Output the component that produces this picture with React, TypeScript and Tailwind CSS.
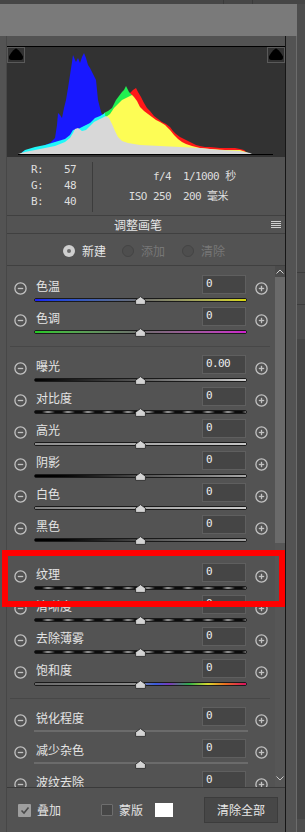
import React from 'react'

type Track = 'temp' | 'tint' | 'exposure' | 'pattern' | 'light' | 'shadow' | 'white' | 'black' | 'sat' | 'plain'

type Row = { label: string; value: string; track: Track }

// full class strings per track type (tailwind needs them written out)
const trackClass: Record<Track, string> = {
  temp: 'bg-linear-to-r from-[#1c1cf4] via-[#6c6c6c] to-[#d8d800]',
  tint: 'bg-linear-to-r from-[#20c820] via-[#6c6c6c] to-[#cc1ecc]',
  exposure: 'bg-linear-to-r from-[#030303] via-[#5a5a5a] to-[#cfcfcf]',
  pattern:
    'bg-[repeating-linear-gradient(90deg,#0b0b0b_0px,#0b0b0b_7px,#8a8a8a_12px,#8a8a8a_14px,#0b0b0b_20px)]',
  light: 'bg-linear-to-r from-[#8e8e8e] to-[#c4c4c4]',
  shadow: 'bg-linear-to-r from-[#000000] via-[#505050] to-[#a8a8a8]',
  white: 'bg-linear-to-r from-[#808080] to-[#cacaca]',
  black: 'bg-linear-to-r from-[#000000] via-[#4c4c4c] to-[#a0a0a0]',
  sat: 'bg-[linear-gradient(90deg,#6a6a6a,#8c8c8c_48%,#3a5cdc_57%,#7a3ab8_64%,#2fae4a_73%,#d8d830_82%,#e87020_90%,#d81060_100%)]',
  plain: 'bg-[#6b6b6b]',
}

const sections: Row[][] = [
  [
    { label: '色温', value: '0', track: 'temp' },
    { label: '色调', value: '0', track: 'tint' },
  ],
  [
    { label: '曝光', value: '0.00', track: 'exposure' },
    { label: '对比度', value: '0', track: 'pattern' },
    { label: '高光', value: '0', track: 'light' },
    { label: '阴影', value: '0', track: 'shadow' },
    { label: '白色', value: '0', track: 'white' },
    { label: '黑色', value: '0', track: 'black' },
  ],
  [
    { label: '纹理', value: '0', track: 'pattern' },
    { label: '清晰度', value: '0', track: 'pattern' },
    { label: '去除薄雾', value: '0', track: 'pattern' },
    { label: '饱和度', value: '0', track: 'sat' },
  ],
  [
    { label: '锐化程度', value: '0', track: 'plain' },
    { label: '减少杂色', value: '0', track: 'plain' },
    { label: '波纹去除', value: '0', track: 'plain' },
  ],
]

function RoundIcon({ plus }: { plus?: boolean }) {
  return (
    <svg width="13" height="13" viewBox="0 0 13 13" className="mt-[7px] shrink-0">
      <circle cx="6.5" cy="6.5" r="5.6" fill="none" stroke="#c2c2c2" strokeWidth="1.3" />
      <line x1="3.8" y1="6.5" x2="9.2" y2="6.5" stroke="#c2c2c2" strokeWidth="1.3" />
      {plus && <line x1="6.5" y1="3.8" x2="6.5" y2="9.2" stroke="#c2c2c2" strokeWidth="1.3" />}
    </svg>
  )
}

function Thumb() {
  return (
    <svg width="11" height="9" viewBox="0 0 11 9" className="absolute left-[101px] top-[-2px]">
      <path d="M5.5 0.6 L10.4 4.2 L10.4 8.4 L0.6 8.4 L0.6 4.2 Z" fill="#d4d4d4" stroke="#2a2a2a" strokeWidth="0.9" />
    </svg>
  )
}

function SliderRow({ row }: { row: Row }) {
  return (
    <div className="flex h-[32px] items-start px-[7px]">
      <RoundIcon />
      <div className="ml-[7px] mr-[8px] w-[213px]">
        <div className="flex h-[19px] items-center">
          <span className="flex-1 pl-[2px] pt-[3px] text-[12px] leading-none text-[#e4e4e4]">{row.label}</span>
          <div className="mr-[1px] flex h-[19px] w-[44px] items-center border border-[#5f5f5f] bg-[#454545] pl-[3px] font-['DejaVu_Sans_Mono',monospace] text-[11px] tracking-[-0.6px] text-[#ececec]">
            {row.value}
          </div>
        </div>
        <div className="relative mt-[4px] h-[4px]">
          {row.track === 'plain' ? (
            <div className="mt-[1px] h-[2px] w-[214px] bg-[#6b6b6b]" />
          ) : (
            <div className="h-[4px] rounded-[2px] border border-[#1a1a1a] p-0">
              <div className={'h-full w-full ' + trackClass[row.track]} />
            </div>
          )}
          <Thumb />
        </div>
      </div>
      <RoundIcon plus />
    </div>
  )
}

function Histogram() {
  return (
    <svg width="278" height="110" viewBox="0 0 278 110">
      <g transform="translate(-7,-47)">
        <polygon
          fill="#1818ff"
          points="22,154 22,152 30,149 40,147 50,143 55,138 57,125 58,113 60,115 62,118 64,108 66,100 68,88 70,75 72,62 73,55 75,60 76,62 78,58 80,63 82,57 84,53 86,58 88,65 90,68 92,72 94,76 96,80 97,90 98,100 100,108 101,112 104,118 104,154"
        />
        <polygon
          fill="#ff1818"
          points="130,154 130,93 133,90 136,88 138,92 141,97 144,103 147,108 150,111 154,116 158,119 162,122 166,124 170,127 173,131 176,134 180,137 184,139 188,141 192,143 196,145 200,146 205,147 210,147 220,148 235,148 240,149 244,150 246,152 246,154"
        />
        <polygon
          fill="#20f050"
          points="104,154 104,113 108,111 112,108 116,100 119,96 122,92 124,90 126,86 127,88 129,92 132,95 134,98 136,154"
        />
        <polygon
          fill="#fdfd55"
          points="106,154 106,117 110,114 114,108 118,104 122,100 126,98 130,96 132,95 134,97 137,101 140,107 144,111 148,114 152,117 156,120 160,122 165,125 170,130 174,135 178,139 182,142 186,144 192,146 200,148 210,149 225,150 240,150 246,152 250,154"
        />
        <polygon
          fill="#20f8f8"
          points="20,154 25,150 35,147 45,145 55,142 65,139 70,135 73,130 78,129 84,126 90,123 95,118 100,116 105,113 108,154"
        />
        <polygon
          fill="#d8d8d8"
          points="18,154 25,152 35,150 45,148 55,146 65,142 70,138 73,133 75,129 78,128 82,131 86,130 90,126 94,122 98,120 102,118 106,116 109,118 112,124 115,131 118,137 122,141 128,143 140,145 160,146 180,147 200,148 220,150 240,151 250,153 252,154"
        />
        <line x1="18" y1="154.5" x2="273" y2="154.5" stroke="#000" strokeWidth="1" />
        <rect x="7.5" y="47.5" width="17" height="15" fill="none" stroke="#5a5a5a" />
        <path d="M16 48.5 C17.5 48.5 22 54 23 56.5 Q23.5 60 20.5 60 L11.5 60 Q8.5 60 9 56.5 C10 54 14.5 48.5 16 48.5 Z" fill="#000" />
        <rect x="267.5" y="47.5" width="17" height="15" fill="none" stroke="#5a5a5a" />
        <path d="M276 48.5 C277.5 48.5 282 54 283 56.5 Q283.5 60 280.5 60 L271.5 60 Q268.5 60 269 56.5 C270 54 274.5 48.5 276 48.5 Z" fill="#000" />
      </g>
    </svg>
  )
}

function Radio({ label, on }: { label: string; on?: boolean }) {
  return (
    <div className="flex items-center gap-[7px]">
      {on ? (
        <div className="flex h-[12px] w-[12px] items-center justify-center rounded-full bg-[#cfcfcf]">
          <div className="h-[4px] w-[4px] rounded-full bg-[#6a6a6a]" />
        </div>
      ) : (
        <div className="h-[12px] w-[12px] rounded-full border border-[#444444] bg-[#4e4e4e]" />
      )}
      <span className={'text-[12px] leading-none ' + (on ? 'text-[#e6e6e6]' : 'text-[#777777]')}>{label}</span>
    </div>
  )
}

export default function App() {
  return (
    <div className="relative h-[832px] w-[305px] overflow-hidden bg-[#4b4b4b] font-['Noto_Sans_CJK_SC','Liberation_Sans',sans-serif]">
      {/* top strip */}
      <div className="flex h-[4px] bg-[#464646]">
        <div className="ml-[223px] h-full w-[1px] bg-[#3a3a3a]" />
        <div className="ml-[28px] h-full w-[1px] bg-[#3a3a3a]" />
      </div>

      <div className="flex h-[828px]">
        <div className="flex w-[297px] flex-col">
          {/* header */}
          <div className="h-[32px] bg-[#7a7a7a]" />

          <div className="flex flex-1 bg-[#535353]">
            <div className="w-[6px]" />
            <div className="flex w-[280px] flex-col border-l border-r border-l-[#474747] border-r-[#161616]">
              <div className="h-[10px]" />

              {/* histogram */}
              <div className="h-[111px] border-t border-black bg-[#323232]">
                <Histogram />
              </div>

              {/* camera info */}
              <div className="flex h-[59px] border-b border-[#404040] font-['DejaVu_Sans_Mono','Noto_Sans_CJK_SC',monospace] text-[11px] tracking-[-0.6px] text-[#dedede]">
                <div className="flex w-[85px] flex-col pl-[24px] pt-[5px]">
                  {[
                    ['R:', '57'],
                    ['G:', '48'],
                    ['B:', '40'],
                  ].map(([k, v]) => (
                    <div key={k} className="flex h-[16px] w-[45px] items-center justify-between">
                      <span>{k}</span>
                      <span>{v}</span>
                    </div>
                  ))}
                </div>
                <div className="mt-[5px] h-[50px] w-[1px] bg-[#3c3c3c]" />
                <div className="grid grid-cols-[78px_auto] content-start gap-x-[12px] pt-[10px]">
                  <span className="h-[20px] text-right leading-[20px]">f/4</span>
                  <span className="h-[20px] leading-[20px]">1/1000 秒</span>
                  <span className="h-[20px] text-right leading-[20px]">ISO 250</span>
                  <span className="h-[20px] leading-[20px]">200 毫米</span>
                </div>
              </div>

              {/* title */}
              <div className="flex h-[18px] items-center border-b border-[#404040]">
                <span className="pl-[107px] text-[12px] leading-none text-[#e6e6e6]">调整画笔</span>
                <div className="ml-auto mr-[4px] flex w-[10px] flex-col gap-[1px]">
                  <div className="h-[1px] bg-[#d0d0d0]" />
                  <div className="h-[1px] bg-[#d0d0d0]" />
                  <div className="h-[1px] bg-[#d0d0d0]" />
                  <div className="h-[1px] bg-[#d0d0d0]" />
                </div>
              </div>

              {/* mode radios */}
              <div className="flex h-[32px] items-center border-b border-[#404040] pl-[56px] pt-[2px]">
                <Radio label="新建" on />
                <div className="ml-[16px]">
                  <Radio label="添加" />
                </div>
                <div className="ml-[17px]">
                  <Radio label="清除" />
                </div>
              </div>

              {/* sliders */}
              <div className="flex h-[521px] overflow-hidden">
                <div className="w-[268px]">
                  {sections.map((rows, i) => (
                    <div key={i} className={i === 0 ? 'pt-[9px]' : 'pt-[8px]'}>
                      {rows.map((r) => (
                        <SliderRow key={r.label} row={r} />
                      ))}
                      {i < sections.length - 1 && <div className="ml-[3px] mr-[5px] mt-[7px] h-[1px] bg-[#474747]" />}
                    </div>
                  ))}
                </div>
                <div className="flex w-[10px] flex-col">
                  <div className="flex h-[11px] items-center justify-center bg-[#4b4b4b]">
                    <svg width="8" height="5" viewBox="0 0 8 5">
                      <path d="M0.5 4.5 L4 1 L7.5 4.5" fill="none" stroke="#d0d0d0" strokeWidth="1" />
                    </svg>
                  </div>
                  <div className="h-[266px] bg-[#6a6a6a]" />
                  <div className="flex-1 bg-[#565656]" />
                  <div className="flex h-[12px] items-start justify-center bg-[#565656] pt-[1px]">
                    <svg width="8" height="5" viewBox="0 0 8 5">
                      <path d="M0.5 0.5 L4 4 L7.5 0.5" fill="none" stroke="#c8c8c8" strokeWidth="1" />
                    </svg>
                  </div>
                </div>
              </div>

              {/* bottom bar */}
              <div className="flex h-[45px] items-center border-t border-[#3a3a3a] pl-[11px]">
                <div className="flex h-[13px] w-[13px] items-center justify-center rounded-[1px] bg-[#9e9e9e]">
                  <svg width="10" height="9" viewBox="0 0 10 9">
                    <path d="M1.5 4.5 L4 7 L8.5 1.5" fill="none" stroke="#4a4a4a" strokeWidth="1.6" />
                  </svg>
                </div>
                <span className="ml-[6px] text-[12px] leading-none text-[#e2e2e2]">叠加</span>
                <div className="ml-[40px] h-[12px] w-[12px] rounded-[1px] border border-[#6e6e6e] bg-[#464646]" />
                <span className="ml-[6px] text-[12px] leading-none text-[#e2e2e2]">蒙版</span>
                <div className="ml-[12px] h-[14px] w-[18px] bg-white" />
                <div className="ml-[31px] flex h-[26px] w-[74px] items-center justify-center border border-[#3c3c3c] bg-[#474747] text-[12px] leading-none text-[#e8e8e8]">
                  清除全部
                </div>
              </div>
            </div>
            <div className="w-[10px]" />
            <div className="w-[1px] bg-[#6c6c6c]" />
          </div>
        </div>

        {/* right edge strip */}
        <div className="flex w-[8px] flex-col bg-[#4d4d4d]">
          <div className="mt-[268px] h-[1px] bg-[#3c3c3c]" />
          <div className="mt-[31px] h-[1px] bg-[#3c3c3c]" />
          <div className="mt-[34px] h-[480px] bg-[#454545]" />
        </div>
      </div>

      {/* red highlight box */}
      <div className="absolute left-[2px] top-[550px] h-[57px] w-[283px] border-[6px] border-[#ff0000]" />
    </div>
  )
}
